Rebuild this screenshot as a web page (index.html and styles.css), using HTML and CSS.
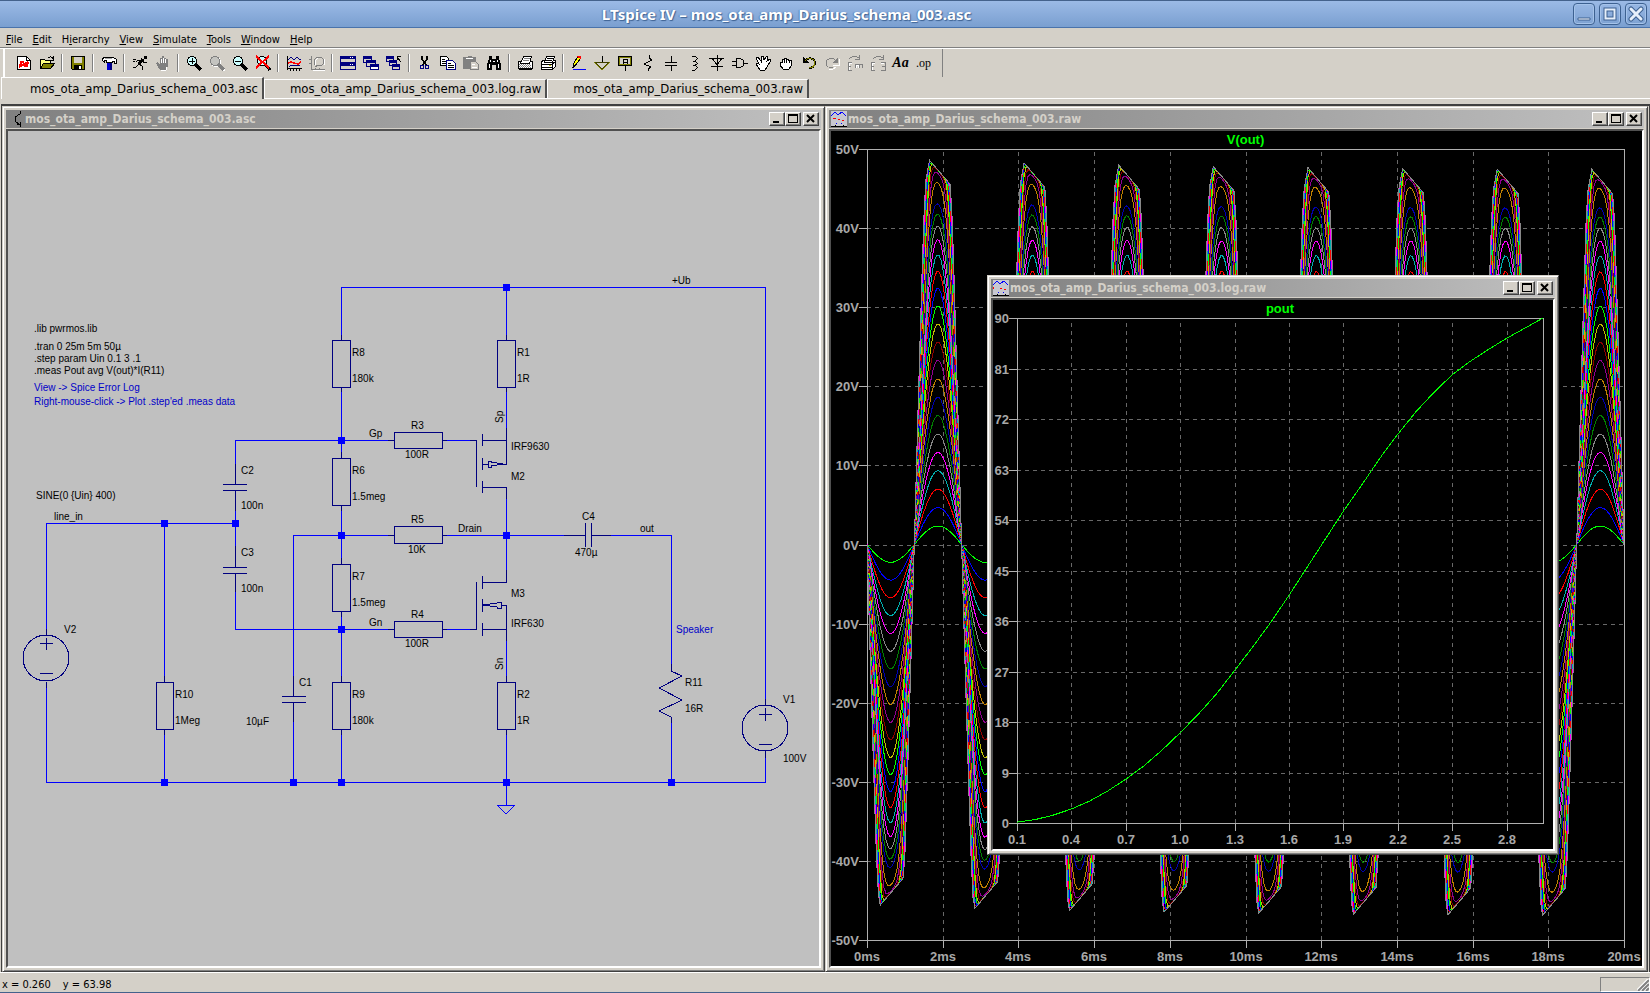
FILE: index.html
```html
<!DOCTYPE html>
<html lang="en">
<head>
    <meta charset="UTF-8">
    <meta name="viewport" content="width=device-width, initial-scale=1.0">
    <title>LTspice IV - mos_ota_amp_Darius_schema_003.asc</title>
    <link rel="stylesheet" href="styles.css">
</head>
<body>
    <header class="app-title">
        <h1>LTspice IV – mos_ota_amp_Darius_schema_003.asc</h1>
        <div class="app-buttons">
            <button aria-label="Minimize"><svg width="16" height="16"><path d="M2 12h12v2H2z" fill="#fff" stroke="#3d6191"/></svg></button>
            <button aria-label="Maximize"><svg width="16" height="16"><path d="M3.5 3.5h9v9h-9z" fill="none" stroke="#3d6191" stroke-width="4"/><path d="M3.5 3.5h9v9h-9z" fill="none" stroke="#e6effa" stroke-width="2"/></svg></button>
            <button aria-label="Close"><svg width="16" height="16"><path d="M3 3l10 10M13 3L3 13" stroke="#3d6191" stroke-width="5" stroke-linecap="round"/><path d="M3 3l10 10M13 3L3 13" stroke="#e6effa" stroke-width="3" stroke-linecap="round"/></svg></button>
        </div>
    </header>

    <nav class="menubar">
        <button><u>F</u>ile</button>
        <button><u>E</u>dit</button>
        <button>H<u>i</u>erarchy</button>
        <button><u>V</u>iew</button>
        <button><u>S</u>imulate</button>
        <button><u>T</u>ools</button>
        <button><u>W</u>indow</button>
        <button><u>H</u>elp</button>
    </nav>

    <div class="toolbar">
        <button aria-label="New schematic"><svg viewBox="0 0 16 16"><path d="M1.5 1.5h9l4 4v9h-13z" fill="#fff" stroke="#000"/><path d="M10.500 1.500v4h4" fill="none" stroke="#000"/><path d="M4 11l1-4h3M12 7l-1 4H8M3 12l9-5" stroke="#f00" stroke-width="2" fill="none"/></svg></button>
        <button aria-label="Open"><svg viewBox="0 0 16 16"><path d="M1.500 13.500v-9h4l1 1h5v3" fill="#ffff80" stroke="#000"/><path d="M1.500 13.500l3-5h11l-4 5z" fill="#808000" stroke="#000"/><path d="M9 3c2-2 4-1 5 1M14 1v4h-4" fill="none" stroke="#000"/></svg></button>
        <hr>
        <button aria-label="Save"><svg viewBox="0 0 16 16"><path d="M1.500 1.500h13v13h-12l-1-1z" fill="#808000" stroke="#000"/><path d="M4 2h8v6H4z" fill="#d4d0c8"/><path d="M4 10h8v5H4z" fill="#000"/><path d="M9 11h2v3H9z" fill="#fff"/></svg></button>
        <hr>
        <button aria-label="Control panel"><svg viewBox="0 0 16 16"><path d="M6 7h5v8H6z" fill="#0000d0"/><path d="M9 7h2v8H9z" fill="#000080"/><path d="M1 5l2-3h8l4 2v4h-2V6h-2v1H5V5H3v2z" fill="#fff" stroke="#000"/><path d="M4 3h7v1H4z" fill="#a0a0a0"/></svg></button>
        <hr>
        <button aria-label="Run"><svg viewBox="0 0 16 16"><path d="M12 1h3v3h-3z" fill="#000"/><path d="M11 4L7 9M10 5H6L4 7M10 5l2 3 3-1M7 9l3 2v4M7 9l-3 3H1M1 4h3M1 6h2" fill="none" stroke="#000"/><path d="M11 4L7 9" stroke="#000" stroke-width="3"/></svg></button>
        <button aria-label="Halt" disabled><svg viewBox="0 0 16 16"><path d="M5 15l-3-5-1-2 1-1 3 2V3h2V1h2v2h2v1h2v7l-2 4z" fill="#808080"/><path d="M6 4v4M8 3v5M10 4v4M12 12l-1 3H6" stroke="#fff" fill="none"/></svg></button>
        <hr>
        <button aria-label="Zoom to rectangle"><svg viewBox="0 0 16 16"><circle cx="6" cy="6" r="4.500" fill="#cff" stroke="#000"/><path d="M3 6h6M6 3v6" stroke="#000"/><path d="M9 9l6 6" stroke="#000" stroke-width="3"/></svg></button>
        <button aria-label="Pan" disabled><svg viewBox="0 0 16 16"><circle cx="7" cy="7" r="4.500" fill="none" stroke="#fff"/><path d="M10 10l6 6" stroke="#fff" stroke-width="3"/><circle cx="6" cy="6" r="4.500" fill="#c4c4c0" stroke="#808080"/><path d="M9 9l6 6" stroke="#808080" stroke-width="3"/></svg></button>
        <button aria-label="Zoom back"><svg viewBox="0 0 16 16"><circle cx="6" cy="6" r="4.500" fill="#cff" stroke="#000"/><path d="M3 6h6" stroke="#000"/><path d="M9 9l6 6" stroke="#000" stroke-width="3"/></svg></button>
        <button aria-label="Zoom full extents"><svg viewBox="0 0 16 16"><circle cx="7" cy="6" r="4.500" fill="#cff" stroke="#000"/><path d="M10 9l5 6" stroke="#000" stroke-width="3"/><path d="M1 1l13 12M14 1L1 13" stroke="#f00" stroke-width="2"/></svg></button>
        <hr>
        <button aria-label="Autorange"><svg viewBox="0 0 16 16"><path d="M1.500 1v14M1 13.500h15M4 13v3M7 13v3M10 13v3M13 13v3" stroke="#000" fill="none"/><path d="M2 5l3-3 3 3 3-3 3 3 1-1" stroke="#000080" fill="none"/><path d="M2 8l3-1 3 1 4 1 3-2" stroke="#f00" fill="none" stroke-width="1.500"/><path d="M3 12l2-2 3 1 3-1 3 1" stroke="#000080" fill="none"/></svg></button>
        <button aria-label="Add trace" disabled><svg viewBox="0 0 16 16"><path d="M2.500 1v13h13M0 4h3M0 8h3M6 13v3M10 13v3" stroke="#808080" fill="none"/><path d="M5 10V5l3-3h4l2 2v5l-2 2-3-1-3 2" stroke="#808080" fill="none"/><path d="M4 15h12M6 10V6l3-3M15 4v6" stroke="#fff" fill="none"/></svg></button>
        <hr>
        <button aria-label="Tile windows"><svg viewBox="0 0 16 16"><path d="M0 1h16v14H0z" fill="#000080"/><path d="M1 4h14v3H1zM1 11h14v3H1z" fill="#d4d0c8"/><path d="M10 2h1v1h-1zM12 2h1v1h-1zM10 9h1v1h-1zM12 9h1v1h-1z" fill="#fff"/></svg></button>
        <button aria-label="Cascade windows"><svg viewBox="0 0 16 16"><path d="M.5 1.500h8v6h-8z" fill="#d4d0c8" stroke="#000080"/><path d="M0 1h9v3H0z" fill="#000080"/><path d="M3.500 5.500h9v6h-9z" fill="#d4d0c8" stroke="#000080"/><path d="M3 5h10v3H3z" fill="#000080"/><path d="M7.500 9.500h8v5h-8z" fill="#fff" stroke="#000080"/><path d="M7 9h9v3H7z" fill="#000080"/></svg></button>
        <button aria-label="Close windows"><svg viewBox="0 0 16 16"><path d="M.5 1.500h7v5h-7zM3.500 5.500h7v5h-7zM6.500 9.500h7v5h-7z" fill="#d4d0c8" stroke="#000080"/><path d="M0 1h8v3H0zM3 5h8v3H3zM6 9h8v3H6z" fill="#000080"/><path d="M15 7l-4-5M11 5V1.500h4" fill="none" stroke="#000"/></svg></button>
        <hr>
        <button aria-label="Cut"><svg viewBox="0 0 16 16"><path d="M5 1v3l4 6M10 1v3L6 10" stroke="#000" fill="none" stroke-width="1.500"/><circle cx="5" cy="12" r="2" fill="none" stroke="#000080"/><circle cx="10" cy="12" r="2" fill="none" stroke="#000080"/></svg></button>
        <button aria-label="Copy"><svg viewBox="0 0 16 16"><path d="M.5 1.500h6l2 2v7h-8z" fill="#fff" stroke="#000"/><path d="M6.500 5.500h6l3 3v6h-9z" fill="#fff" stroke="#000080"/><path d="M2 4h3M2 6h4M2 8h4M8 8h3M8 10h6M8 12h6" stroke="#000"/></svg></button>
        <button aria-label="Paste" disabled><svg viewBox="0 0 16 16"><path d="M0 2h4l1-1h3l1 1h4v12H0z" fill="#808080"/><path d="M3 3h7v1H3z" fill="#fff"/><path d="M7.500 6.500h5l3 3v5h-8z" fill="#d4d0c8" stroke="#808080"/><path d="M9 9h3M9 12h5M16 8v8H7" stroke="#fff" fill="none"/></svg></button>
        <button aria-label="Find"><svg viewBox="0 0 16 16"><path d="M3 1h3v3h4V1h3v3l2 5v6h-5v-5H6v5H1V9l2-5z" fill="#000"/><path d="M4 5h1v2H4zM3 9h1v4H3zM11 5h1v2h-1zM12 9h1v4h-1zM7 6h2v1H7z" fill="#fff"/></svg></button>
        <hr>
        <button aria-label="Print setup"><svg viewBox="0 0 16 16"><path d="M1.500 6.500h14v7h-14z" fill="#fff" stroke="#000"/><path d="M3.500 8.500l3-7h8l-2 7z" fill="#fff" stroke="#000"/><path d="M7 3h6M6 5h6" stroke="#808080"/><path d="M2 9h12M3 10h12M2 11h12M3 12h12" stroke="#808080" stroke-dasharray="1 1"/><path d="M2 14h13" stroke="#000"/></svg></button>
        <button aria-label="Print"><svg viewBox="0 0 16 16"><path d="M1.500 6.500l2-1h12v6l-3 3h-11z" fill="#fff" stroke="#000"/><path d="M4.500 7.500l2-6h8l-2 6z" fill="#fff" stroke="#000"/><path d="M1 9h11l3-2M1 12h11M12 9v5M7 3h6M6 5h6" stroke="#000" fill="none"/><path d="M9 10h2v1H9z" fill="#cc0"/></svg></button>
        <hr>
        <button aria-label="Wire"><svg viewBox="0 0 16 16"><path d="M2 12l1-4 4-7h2v3l-5 7z" fill="#ff0" stroke="#000"/><path d="M6 1h4v3L7 3z" fill="#f00"/><path d="M2 13l1-3 2 1z" fill="#000"/><path d="M2 14.500h13" stroke="#00f"/></svg></button>
        <button aria-label="Ground"><svg viewBox="0 0 16 16"><path d="M8 1v7" stroke="#000"/><path d="M1 7.500h14l-7 7z" fill="none" stroke="#808000"/><path d="M1 7.500h14M2 8l6 6 6-6" fill="none" stroke="#404000"/></svg></button>
        <button aria-label="Label net"><svg viewBox="0 0 16 16"><path d="M1.500 1.500h13v9h-13z" fill="#808000" stroke="#000"/><path d="M3 3h10v6H3z" fill="#d4d0c8"/><path d="M8 11v5M6 9V4h4v5M6 7h4" stroke="#000" fill="none"/></svg></button>
        <button aria-label="Resistor"><svg viewBox="0 0 16 16"><path d="M9 0v3l3 2-8 4 7 3-3 2v2" fill="none" stroke="#000"/></svg></button>
        <button aria-label="Capacitor"><svg viewBox="0 0 16 16"><path d="M8 1v6M2 7h12M2 10h12M8 10v6" fill="none" stroke="#000"/></svg></button>
        <button aria-label="Inductor"><svg viewBox="0 0 16 16"><path d="M6 1h3l2 2v1L9 6H7h2l2 2v1l-2 1H7h2l2 2v1l-2 2H6" fill="none" stroke="#000"/></svg></button>
        <button aria-label="Diode"><svg viewBox="0 0 16 16"><path d="M8 0v16M0 3h15M3 3l5 7 5-7M2 11h12" fill="none" stroke="#000"/></svg></button>
        <button aria-label="Component"><svg viewBox="0 0 16 16"><path d="M4.500 3.500h4l3 2v5l-3 2h-4zM0 6h5M0 10h5M11 8h5" fill="none" stroke="#000"/></svg></button>
        <button aria-label="Move"><svg viewBox="0 0 16 16"><path d="M5 15L1 9l1-1 2 1-3-6 2-1 3 4V1h2l1 4 3-4 1 1-1 4 3-2 1 1-4 7-2 3z" fill="#fff" stroke="#000"/></svg></button>
        <button aria-label="Drag"><svg viewBox="0 0 16 16"><path d="M5 14l-3-4V7h2V4h2V3h2v1h2v1h3v6l-2 3z" fill="#fff" stroke="#000"/><path d="M6 4v4M8.500 4v4M11 5v3" stroke="#000"/></svg></button>
        <button aria-label="Undo"><svg viewBox="0 0 16 16"><path d="M2 2v6h6z" fill="#000"/><path d="M4 6c4-5 10-2 10 2 0 3-3 5-6 5" fill="none" stroke="#000" stroke-width="2"/><path d="M4 6c4-5 10-2 10 2 0 3-3 5-6 5" fill="none" stroke="#808000"/></svg></button>
        <button aria-label="Redo" disabled><svg viewBox="0 0 16 16"><path d="M15 4v6H9" fill="none" stroke="#fff"/><path d="M14 2v6H8z" fill="#808080"/><path d="M12 6C8 1 2 4 2 8c0 3 3 5 7 5" fill="none" stroke="#808080"/><path d="M12 12l-3 2H5" fill="none" stroke="#fff"/></svg></button>
        <button aria-label="Rotate" disabled><svg viewBox="0 0 16 16"><path d="M2 4c2-3 7-3 10-1M12 0v4H8" fill="none" stroke="#808080"/><path d="M5 7H1v8h4M1 11h3M15 13V9H8v4M12 9v4" fill="none" stroke="#808080"/><path d="M5 8H2v3M2 12v3M16 14v-4M9 13v-3h2v3" fill="none" stroke="#fff"/></svg></button>
        <button aria-label="Mirror" disabled><svg viewBox="0 0 16 16"><path d="M3 4c2-3 7-3 10-1M13 0v4H9" fill="none" stroke="#808080"/><path d="M5 7H1v8h4M1 11h3M11 7h4v8h-4M12 11h3" fill="none" stroke="#808080"/><path d="M5 8H2v3M2 12v3M16 8v8M11 8h3" fill="none" stroke="#fff"/></svg></button>
        <button class="tool-text">Aa</button>
        <button class="tool-op">.op</button>
    </div>

    <div class="tabs">
        <button class="tab active">mos_ota_amp_Darius_schema_003.asc</button>
        <button class="tab">mos_ota_amp_Darius_schema_003.log.raw</button>
        <button class="tab">mos_ota_amp_Darius_schema_003.raw</button>
    </div>

    <main class="mdi">
        <section class="window">
            <div class="window-title">
                <svg width="16" height="16"><path d="M12 0v3L7 6v4l5 4v2M9 13l3 1v-3" fill="none" stroke="#000" shape-rendering="crispEdges"/></svg>
                <h2>mos_ota_amp_Darius_schema_003.asc</h2>
                <button aria-label="Minimize"><svg width="12" height="10"><path d="M2 7h6v2H2z"/></svg></button>
                <button aria-label="Maximize"><svg width="12" height="10"><path d="M1 0h10v9H1zM2 2v6h8V2z" fill-rule="evenodd"/></svg></button>
                <button class="close" aria-label="Close"><svg width="12" height="10"><path d="M2 1l7 7M9 1L2 8" stroke="#000" stroke-width="2"/></svg></button>
            </div>
            <div class="pane schematic">
                <svg width="811" height="835" viewBox="8 131 811 835">
                    <!-- wires -->
                    <path class="wire" d="M341 335V287H765V699M506 287V335M506 392V428M341 392V452M388 440H235V464M447 440H470
                        M341 511V558M388 535H293V676M447 535H564M506 499V570M611 535H671V664M671 723V782
                        M341 617V676M388 629H235V592M447 629H470M506 641V676M506 735V805M341 735V782M293 722V782
                        M235 511V546M235 523H46V629M46 688V782H765V758M164 523V676M164 735V782M497 805H515L506 814Z"/>
                    <!-- resistors -->
                    <path class="part" d="M332 340h18v47h-18zM341 335v5M341 387v5M497 340h18v47h-18zM506 335v5M506 387v5
                        M332 458h18v47h-18zM341 452v6M341 505v6M332 564h18v47h-18zM341 558v6M341 611v6
                        M332 682h18v47h-18zM341 676v6M341 729v6M497 682h18v47h-18zM506 676v6M506 729v6
                        M156 682h17v47h-17zM164 676v6M164 729v6
                        M394 432h48v16h-48zM388 440h6M442 440h5M394 526h48v17h-48zM388 535h6M442 535h5
                        M394 621h48v16h-48zM388 629h6M442 629h5
                        M671 664v7l11 5-23 12 23 12-23 11 12 6v6"/>
                    <!-- capacitors -->
                    <path class="part" d="M223 484h24M223 490h24M235 464v20M235 490v21M223 567h24M223 573h24M235 546v21M235 573v19
                        M282 696h24M282 702h24M293 676v20M293 702v20M585 523v24M591 523v24M564 535h21M591 535h20"/>
                    <!-- mosfets -->
                    <path class="part" d="M470 440h6v47M482 434v12M482 458v12M482 481v12M482 440h24M506 428v36h-3M482 464h6M482 487h24v12
                        M491 462v-1h-3v6h3v-1M491 462l12 2-12 2
                        M470 629h6v-47M482 576v13M482 599v13M482 623v13M482 582h24v-12M482 629h24M506 641v-36h-5M497 603v-1h4v6h-4v-1M497 603l-14 2 14 2"/>
                    <!-- sources -->
                    <path class="part" d="M46 629v6M46 682v6M40 643h13M46 638v12M40 673h13M765 699v6M765 751v7M759 714h13M765 708v13M759 744h13"/>
                    <circle class="part" cx="46" cy="658" r="23"/>
                    <circle class="part" cx="765" cy="728" r="23"/>
                    <!-- junctions -->
                    <path class="node" d="M341 437v7M341 532v7M341 626v7M341 779v7M506 284v7M506 532v7M506 779v7M164 520v7M235 520v7M164 779v7M293 779v7M671 779v7"/>
                    <g class="labels">
                        <text x="34" y="332">.lib pwrmos.lib</text>
                        <text x="34" y="350">.tran 0 25m 5m 50µ</text>
                        <text x="34" y="362">.step param Uin 0.1 3 .1</text>
                        <text x="34" y="374">.meas Pout avg V(out)*I(R11)</text>
                        <text class="note" x="34" y="391">View -&gt; Spice Error Log</text>
                        <text class="note" x="34" y="405">Right-mouse-click -&gt; Plot .step'ed .meas data</text>
                        <text x="36" y="499">SINE(0 {Uin} 400)</text>
                        <text x="54" y="520">line_in</text>
                        <text x="241" y="474">C2</text><text x="241" y="509">100n</text>
                        <text x="241" y="556">C3</text><text x="241" y="592">100n</text>
                        <text x="64" y="633">V2</text>
                        <text x="175" y="698">R10</text><text x="175" y="724">1Meg</text>
                        <text x="299" y="686">C1</text><text x="246" y="725">10µF</text>
                        <text x="352" y="356">R8</text><text x="352" y="382">180k</text>
                        <text x="352" y="474">R6</text><text x="352" y="500">1.5meg</text>
                        <text x="352" y="580">R7</text><text x="352" y="606">1.5meg</text>
                        <text x="352" y="698">R9</text><text x="352" y="724">180k</text>
                        <text x="369" y="437">Gp</text><text x="369" y="626">Gn</text>
                        <text x="411" y="429">R3</text><text x="405" y="458">100R</text>
                        <text x="411" y="523">R5</text><text x="408" y="553">10K</text>
                        <text x="411" y="618">R4</text><text x="405" y="647">100R</text>
                        <text x="458" y="532">Drain</text>
                        <text x="517" y="356">R1</text><text x="517" y="382">1R</text>
                        <text x="511" y="450">IRF9630</text><text x="511" y="480">M2</text>
                        <text x="511" y="597">M3</text><text x="511" y="627">IRF630</text>
                        <text x="517" y="698">R2</text><text x="517" y="724">1R</text>
                        <text x="582" y="520">C4</text><text x="575" y="556">470µ</text>
                        <text x="640" y="532">out</text><text x="672" y="284">+Ub</text>
                        <text class="note" x="676" y="633">Speaker</text>
                        <text x="685" y="686">R11</text><text x="685" y="712">16R</text>
                        <text x="783" y="703">V1</text><text x="783" y="762">100V</text>
                        <text transform="translate(503 423) rotate(-90)">Sp</text>
                        <text transform="translate(503 670) rotate(-90)">Sn</text>
                    </g>
                </svg>
            </div>
        </section>

        <section class="window">
            <div class="window-title">
                <svg class="plot-icon" width="16" height="16"><path d="M0 0h16v16H0z" fill="#c8c8d0"/><path d="M0 5l4-4 3 3 4-3 4 4" fill="none" stroke="#00f"/><path d="M2 7h3v1H2zM7 8h2v1H7zM11 9h2v1h-2z" fill="#f00"/><path d="M5 12h1v1H5zM10 12h1v1h-1z" fill="#00f"/><path d="M0 15h16M4 14v2M12 14v2" stroke="#000"/></svg>
                <h2>mos_ota_amp_Darius_schema_003.raw</h2>
                <button aria-label="Minimize"><svg width="12" height="10"><path d="M2 7h6v2H2z"/></svg></button>
                <button aria-label="Maximize"><svg width="12" height="10"><path d="M1 0h10v9H1zM2 2v6h8V2z" fill-rule="evenodd"/></svg></button>
                <button class="close" aria-label="Close"><svg width="12" height="10"><path d="M2 1l7 7M9 1L2 8" stroke="#000" stroke-width="2"/></svg></button>
            </div>
            <div class="pane"><svg class="plot" id="plot-vout"></svg></div>
        </section>

        <section class="window floating">
            <div class="window-title">
                <svg class="plot-icon" width="16" height="16"><path d="M0 0h16v16H0z" fill="#c8c8d0"/><path d="M0 5l4-4 3 3 4-3 4 4" fill="none" stroke="#00f"/><path d="M0 7h1v2H0zM7 8h2v1H7zM11 9h2v1h-2z" fill="#f00"/><path d="M5 12h1v1H5zM10 12h1v1h-1z" fill="#00f"/><path d="M0 15h16M4 14v2M12 14v2" stroke="#000"/></svg>
                <h2>mos_ota_amp_Darius_schema_003.log.raw</h2>
                <button aria-label="Minimize"><svg width="12" height="10"><path d="M2 7h6v2H2z"/></svg></button>
                <button aria-label="Maximize"><svg width="12" height="10"><path d="M1 0h10v9H1zM2 2v6h8V2z" fill-rule="evenodd"/></svg></button>
                <button class="close" aria-label="Close"><svg width="12" height="10"><path d="M2 1l7 7M9 1L2 8" stroke="#000" stroke-width="2"/></svg></button>
            </div>
            <div class="pane"><svg class="plot" id="plot-pout"></svg></div>
        </section>
    </main>

    <footer class="statusbar">
        <span>x = 0.260</span>
        <span>y = 63.98</span>
        <div class="grip-panel"><svg width="12" height="12"><path d="M0 12L12 0M4 12l8-8M8 12l4-4" stroke="#fff" stroke-width="3"/><path d="M1 12L12 1M5 12l7-7M9 12l3-3" stroke="#808080" stroke-width="2"/></svg></div>
    </footer>

    <script src="plots.js"></script>
</body>
</html>
```
FILE: styles.css
```css
* {
    margin: 0;
    padding: 0;
    box-sizing: border-box;
}

body {
    height: 100vh;
    display: flex;
    flex-direction: column;
    overflow: hidden;
    background: #d4d0c8;
    border-bottom: 1px solid #44628c;
    color: #000;
    font-family: "DejaVu Sans Condensed", "DejaVu Sans", sans-serif;
    font-size: 11px;
}

button {
    font: inherit;
    color: inherit;
    background: none;
    border: none;
}

/* Main title bar */
.app-title {
    height: 28px;
    flex: none;
    display: flex;
    align-items: center;
    background: linear-gradient(#9bbae6, #7a9fd0);
    border-top: 1px solid #44628c;
    border-bottom: 1px solid #4a73ab;
    padding-right: 3px;
}

.app-title h1 {
    flex: 1;
    text-align: center;
    font-family: "Noto Sans", sans-serif;
    font-size: 15px;
    font-weight: 700;
    color: #fff;
    text-shadow: 1px 1px 1px #3d6191, -1px 0 1px #5c83b8;
}

.app-buttons {
    display: flex;
    gap: 4px;
}

.app-buttons button {
    width: 22px;
    height: 22px;
    display: flex;
    align-items: center;
    justify-content: center;
    border: 1px solid #3d6191;
    border-radius: 4px;
    box-shadow: inset 0 0 0 1px #a5c3ea;
}

/* Menu */
.menubar {
    height: 21px;
    flex: none;
    display: flex;
    align-items: center;
    padding: 2px 0 0 1px;
    border-bottom: 1px solid #fff;
    box-shadow: inset 0 -1px #808080;
}

.menubar button {
    padding: 0 5px;
}

/* Toolbar */
.toolbar {
    height: 28px;
    flex: none;
    align-self: flex-start;
    display: flex;
    align-items: center;
    padding: 0 7px 0 7px;
    margin-left: 3px;
    border-left: 2px solid #fff;
    border-right: 1px solid #808080;
}

.toolbar button {
    width: 23px;
    height: 22px;
    display: flex;
    align-items: center;
    justify-content: center;
}

.toolbar svg {
    width: 16px;
    height: 16px;
    shape-rendering: crispEdges;
}

.toolbar hr {
    width: 2px;
    height: 18px;
    margin: 0 3px;
    border: none;
    border-left: 1px solid #808080;
    border-right: 1px solid #fff;
}

.toolbar .tool-text {
    font: italic bold 14px "Liberation Serif", serif;
}

.toolbar .tool-op {
    font: 12px "Liberation Serif", serif;
}

/* Document tabs */
.tabs {
    height: 22px;
    flex: none;
    display: flex;
    align-items: flex-end;
    margin-left: 1px;
    border-bottom: 1px solid #fff;
}

.tab {
    height: 19px;
    padding: 0 4px 0 25px;
    font-size: 13px;
    line-height: 18px;
    border-top: 1px solid #fff;
    border-left: 1px solid #fff;
    border-right: 2px solid #505050;
}

.tab.active {
    height: 22px;
    padding-left: 28px;
    margin-bottom: -1px;
    background: #d4d0c8;
}

/* MDI desktop */
.mdi {
    flex: 1;
    min-height: 0;
    position: relative;
    display: grid;
    grid-template-columns: 1fr 1fr;
    margin-top: 5px;
    border: solid #404040;
    border-width: 2px 1px 0 1px;
    padding-right: 1px;
    margin-left: 1px;
}

.window {
    min-width: 0;
    min-height: 0;
    display: flex;
    flex-direction: column;
    padding: 3px;
    background: #d4d0c8;
    border: 1px solid;
    border-color: #d4d0c8 #404040 #404040 #d4d0c8;
    box-shadow: inset 1px 1px #fff, inset -1px -1px #808080;
}

.floating {
    position: absolute;
    left: 985px;
    top: 169px;
    width: 572px;
    height: 580px;
}

.window-title {
    height: 18px;
    flex: none;
    display: flex;
    align-items: center;
    margin-bottom: 1px;
    padding: 0 2px;
    background: linear-gradient(to right, #808080, #c0c0c0);
}

.window-title h2 {
    flex: 1;
    overflow: hidden;
    white-space: nowrap;
    padding-left: 1px;
    font-size: 12px;
    line-height: 18px;
    font-weight: bold;
    color: #d4d0c8;
}

.plot-icon {
    shape-rendering: crispEdges;
}

.window-title button {
    width: 16px;
    height: 14px;
    display: flex;
    align-items: center;
    justify-content: center;
    background: #d4d0c8;
    border: 1px solid;
    border-color: #fff #404040 #404040 #fff;
    box-shadow: inset -1px -1px #808080;
}

.window-title .close {
    margin-left: 2px;
}

.pane {
    flex: 1;
    min-height: 0;
    overflow: hidden;
    background: #000;
    border: 2px solid;
    border-color: #505050 #fff #fff #505050;
}

/* Schematic */
.schematic {
    background: #c0c0c0;
}

.schematic svg {
    display: block;
    shape-rendering: crispEdges;
}

.wire {
    fill: none;
    stroke: #0000ff;
}

.part {
    fill: none;
    stroke: #000080;
}

.node {
    stroke: #0000ff;
    stroke-width: 7px;
}

.labels {
    font-family: "Liberation Sans", Arial, sans-serif;
    font-size: 10px;
}

.labels .note {
    fill: #0000c8;
}

/* Waveform plots */
.plot {
    display: block;
    width: 100%;
    height: 100%;
    shape-rendering: crispEdges;
    font-family: "Liberation Sans", Arial, sans-serif;
    font-size: 13px;
    font-weight: bold;
    fill: #a8a8a8;
}

.plot .axis {
    fill: none;
    stroke: #b0b0b0;
}

.plot .grid {
    stroke: #686868;
    stroke-dasharray: 4 4;
}

.plot .trace {
    fill: none;
}

.plot .name {
    fill: #00ff00;
}

/* Status bar */
.statusbar {
    height: 20px;
    flex: none;
    display: flex;
    align-items: center;
    gap: 12px;
    padding: 4px 0 0 2px;
    border-top: 1px solid #fff;
}

.grip-panel {
    width: 50px;
    height: 15px;
    margin-left: auto;
    display: flex;
    align-items: flex-end;
    justify-content: flex-end;
    border: 1px solid;
    border-color: #808080 #fff #fff #808080;
}
```
FILE: plots.js
```js
const COLORS = ['#00ff00', '#0000ff', '#ff0000', '#00b0b0', '#ff00ff', '#888888',
    '#008000', '#0000b0', '#c08000', '#900090', '#900000', '#c0c000'];

function add(svg, tag, attrs, text) {
    const el = document.createElementNS('http://www.w3.org/2000/svg', tag);
    for (const key in attrs) el.setAttribute(key, attrs[key]);
    if (text !== undefined) el.textContent = text;
    svg.appendChild(el);
}

function drawPlot(id, o) {
    const svg = document.getElementById(id);
    svg.textContent = '';
    const left = o.left, top = 18;
    const right = svg.clientWidth - o.right;
    const bottom = svg.clientHeight - 26;
    const px = x => left + (x - o.x0) / (o.x1 - o.x0) * (right - left);
    const py = y => bottom - (y - o.y0) / (o.y1 - o.y0) * (bottom - top);

    add(svg, 'text', { x: (left + right) / 2, y: 13, 'text-anchor': 'middle', class: 'name' }, o.name);

    for (let i = 0; i <= Math.round((o.y1 - o.y0) / o.dy); i++) {
        const v = o.y0 + i * o.dy;
        const y = Math.round(py(v));
        add(svg, 'line', { x1: left, x2: right, y1: y, y2: y, class: 'grid' });
        add(svg, 'line', { x1: left - 8, x2: left, y1: y, y2: y, class: 'axis' });
        add(svg, 'text', { x: left - 8, y: y + 5, 'text-anchor': 'end' }, v + o.yUnit);
    }
    for (let v = o.x0; v <= o.x1 + 0.001; v += o.dx) {
        const x = Math.round(px(v));
        add(svg, 'line', { x1: x, x2: x, y1: bottom, y2: top, class: 'grid' });
        add(svg, 'line', { x1: x, x2: x, y1: bottom, y2: bottom + 8, class: 'axis' });
        add(svg, 'text', { x: x, y: bottom + 21, 'text-anchor': 'middle' }, v.toFixed(o.digits) + o.xUnit);
    }
    add(svg, 'rect', { x: left, y: top, width: right - left, height: bottom - top, class: 'axis' });

    o.traces.forEach((points, i) => {
        const list = points.map(p => px(p[0]).toFixed(1) + ',' + py(p[1]).toFixed(1)).join(' ');
        add(svg, 'polyline', { points: list, class: 'trace', stroke: COLORS[i % COLORS.length] });
    });
}

// Amplifier output for one .step of Uin, clipping against a drooping supply
function vout(step, t) {
    const phase = t % 2.5;
    const cycle = Math.floor(t / 2.5);
    const positive = phase >= 1.25;
    const s = Math.abs(Math.sin(2 * Math.PI * 0.4 * t)) * step * (positive ? 2.33 : 2.25);
    const h = positive ? phase - 1.25 : phase;
    const peak = positive ? 48.6 - 1.3 * (1 - Math.exp(-cycle / 3)) : 45.6 + 1.4 * (1 - Math.exp(-cycle / 3));
    const corner = positive ? 0.4 : 0.35;
    const limit = h < corner ? peak - (corner - h) * 26 : peak - (h - corner) * 5.6;
    const sharp = step > 20 ? 8 + (step - 20) * 6 : 8;
    const v = s / Math.pow(1 + Math.pow(s / Math.max(limit, 1), sharp), 1 / sharp);
    return positive ? v : -v;
}

const voutTraces = [];
for (let step = 1; step <= 30; step++) {
    const points = [];
    for (let n = 0; n <= 400; n++) {
        points.push([n * 0.05, vout(step, n * 0.05)]);
    }
    voutTraces.push(points);
}

const pout = [0.15, 0.6, 1.4, 2.5, 3.9, 5.7, 7.8, 10.2, 13, 16.1, 19.4, 23, 27.2, 31.4, 35.8,
    40.6, 45.6, 50.6, 55.6, 60.2, 65, 69.3, 73.3, 76.8, 79.9, 82.3, 84.4, 86.4, 88.2, 90];

function drawAll() {
    drawPlot('plot-vout', {
        name: 'V(out)', left: 36, right: 18, x0: 0, x1: 20, dx: 2, y0: -50, y1: 50, dy: 10,
        xUnit: 'ms', yUnit: 'V', digits: 0, traces: voutTraces
    });
    drawPlot('plot-pout', {
        name: 'pout', left: 24, right: 10, x0: 0.1, x1: 3, dx: 0.3, y0: 0, y1: 90, dy: 9,
        xUnit: '', yUnit: '', digits: 1, traces: [pout.map((p, i) => [(i + 1) / 10, p])]
    });
}

drawAll();
window.addEventListener('resize', drawAll);
```
